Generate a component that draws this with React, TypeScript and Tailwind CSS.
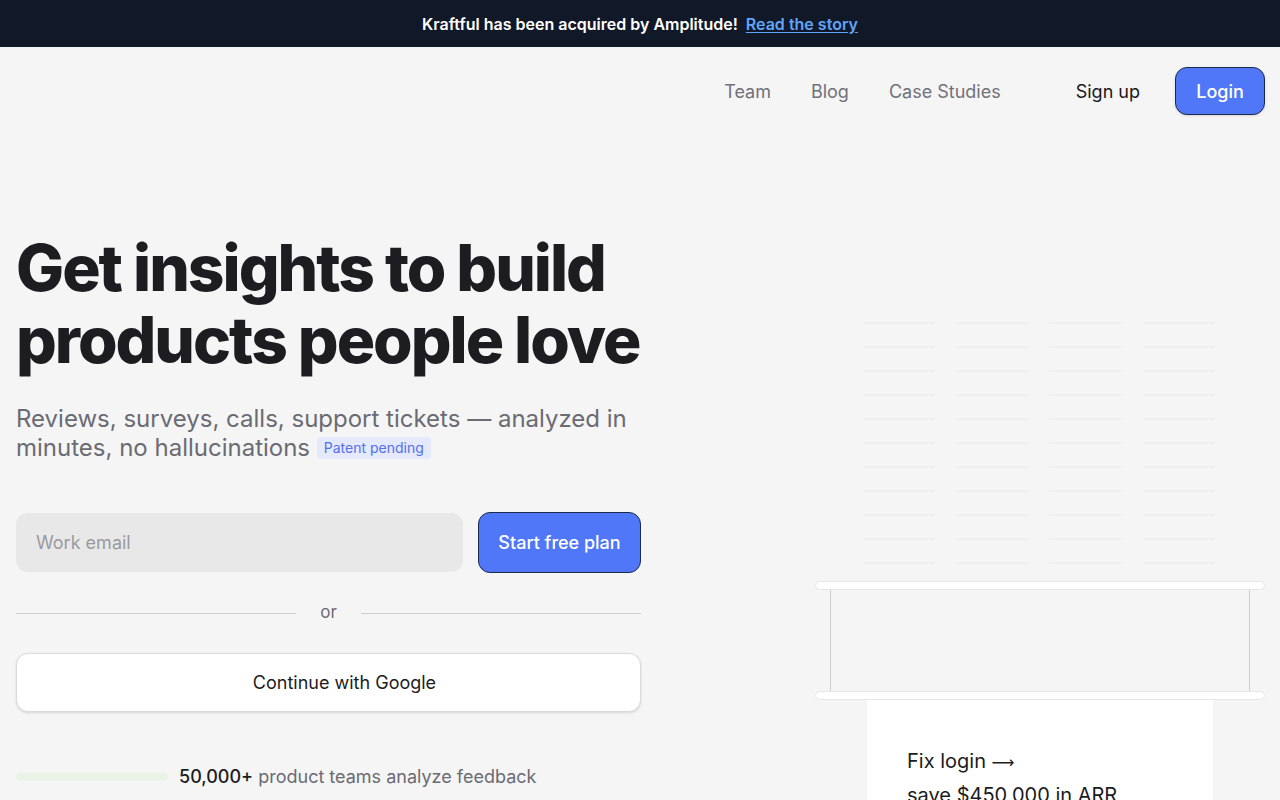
import React from "react";

const ROWS = Array.from({ length: 11 });
const COLS = Array.from({ length: 4 });

const NavLink = ({ label }: { label: string }) => (
  <a className="text-[18px] text-[#71717a]">{label}</a>
);

export default function App() {
  return (
    <div
      className="h-[800px] bg-[#f5f5f5] text-[#1c1c21] overflow-hidden"
      style={{ fontFamily: "Inter, 'Noto Sans', sans-serif" }}
    >
      {/* Announcement bar */}
      <div className="h-[47px] bg-[#111827] flex items-center justify-center gap-2 text-[16px] font-semibold">
        <span className="text-white">Kraftful has been acquired by Amplitude!</span>
        <a className="text-[#60a5fa] underline underline-offset-2">Read the story</a>
      </div>

      {/* Nav */}
      <header className="h-[88px] flex items-center justify-end pr-[15px]">
        <nav className="flex items-center gap-[40px] mr-[75px]">
          <NavLink label="Team" />
          <NavLink label="Blog" />
          <NavLink label="Case Studies" />
        </nav>
        <a className="text-[18px] text-[#18181b] mr-[35px]">Sign up</a>
        <button className="h-[48px] w-[90px] rounded-xl bg-[#4f77f7] border border-[#1e2a4a] text-white text-[18px] font-medium shadow-sm">
          Login
        </button>
      </header>

      {/* Hero */}
      <main className="flex pl-4 pr-[15px]">
        <section className="w-[625px] shrink-0 pt-[97px]">
          <h1 className="text-[64px] leading-[72px] font-extrabold tracking-[-2px] whitespace-nowrap text-[#1c1c21]">
            Get insights to build
            <br />
            products people love
          </h1>
          <p className="mt-[28px] text-[24px] leading-[29px] text-[#6b6b73]">
            Reviews, surveys, calls, support tickets — analyzed in minutes, no hallucinations{" "}
            <span className="inline-block align-[3px] px-[7px] py-[1px] rounded bg-[#e4e9fb] text-[#5470ec] text-[14px] leading-[20px]">
              Patent pending
            </span>
          </p>

          <form className="mt-[51px] flex gap-[15px]">
            <input
              className="h-[59px] w-[447px] rounded-xl bg-[#e8e8e8] px-5 text-[18px] text-[#1c1c21] placeholder-[#9a9aa0] outline-none"
              placeholder="Work email"
            />
            <button
              type="button"
              className="h-[61px] -mt-px flex-1 rounded-xl bg-[#4f77f7] border border-[#1e2a4a] text-white text-[18px] font-medium"
            >
              Start free plan
            </button>
          </form>

          <div className="mt-[30px] h-[20px] flex items-center">
            <div className="w-[280px] h-px bg-[#cfcfcf]" />
            <span className="flex-1 text-center text-[17px] text-[#6b6b73]">or</span>
            <div className="w-[280px] h-px bg-[#cfcfcf]" />
          </div>

          <button className="mt-[30px] w-full h-[59px] pl-[32px] rounded-xl bg-white border border-[#dadada] shadow-sm text-[18px] text-[#1c1c21]">
            Continue with Google
          </button>

          <div className="mt-[51px] flex items-center gap-[11px]">
            <div className="w-[152px] h-[8px] rounded-full bg-[#e9f3e6]" />
            <p className="text-[18px] leading-[28px] text-[#6b6b73]">
              <span className="font-medium text-[#1c1c21]">50,000+</span> product teams analyze feedback
            </p>
          </div>
        </section>

        {/* Visual */}
        <section className="ml-auto w-[450px] pt-[187px]">
          <div className="pl-[48px] pr-[50px] grid grid-cols-4 gap-x-[21px] gap-y-[22px]">
            {ROWS.map((_, r) =>
              COLS.map((_, c) => (
                <div key={`${r}-${c}`} className="h-[2px] rounded-full bg-[#efefef]" />
              ))
            )}
          </div>

          <div className="mt-[17px]">
            <div className="h-[9px] rounded-full bg-white border border-[#e6e6e6]" />
            <div className="mx-[15px] h-[101px] border-x border-[#cfcfcf]" />
            <div className="h-[9px] rounded-full bg-white border border-[#e6e6e6]" />
            <div className="mx-[52px] bg-white px-[40px] pt-[45px] pb-10 text-[20px] leading-[32px] text-[#1c1c21]">
              <p>
                Fix login{" "}
                <span style={{ fontFamily: "'DejaVu Sans', sans-serif" }} className="text-[16px]">
                  ⟶
                </span>
              </p>
              <p>save $450,000 in ARR</p>
            </div>
          </div>
        </section>
      </main>
    </div>
  );
}
